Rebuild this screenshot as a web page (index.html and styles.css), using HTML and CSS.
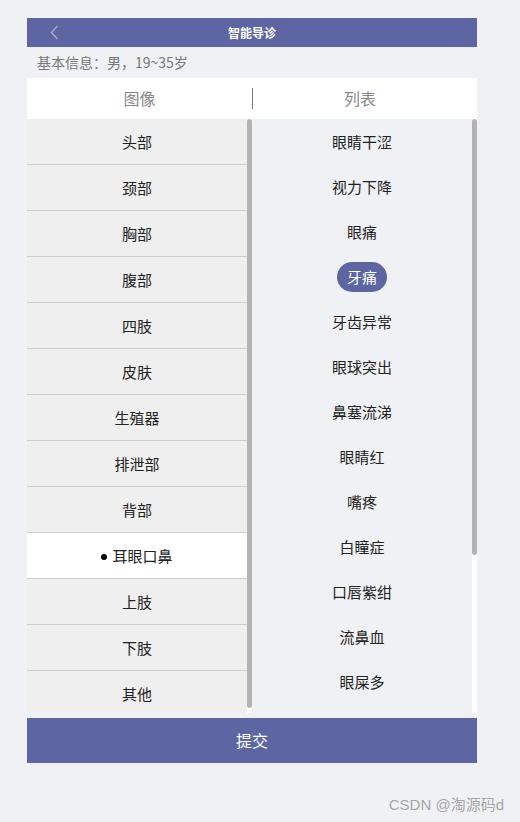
FILE: index.html
```html
<!DOCTYPE html>
<html lang="zh-CN">
<head>
<meta charset="utf-8">
<title>智能导诊</title>
<link rel="stylesheet" href="styles.css">
</head>
<body>
<div class="app">
  <header class="header">
    <div class="back">
      <svg width="9" height="15" viewBox="0 0 9 15"><polyline points="7.5,1 1.5,7.5 7.5,14" fill="none" stroke="#a9acca" stroke-width="1.4"/></svg>
    </div>
    <div class="title">智能导诊</div>
    <div></div>
  </header>
  <div class="info">基本信息：男，19~35岁</div>
  <div class="tabs">
    <div class="tab tab-left">图像</div>
    <div class="tab-divider"></div>
    <div class="tab tab-right">列表</div>
  </div>
  <div class="panels">
    <div class="panel">
      <ul class="parts">
        <li class="part">头部</li>
        <li class="part">颈部</li>
        <li class="part">胸部</li>
        <li class="part">腹部</li>
        <li class="part">四肢</li>
        <li class="part">皮肤</li>
        <li class="part">生殖器</li>
        <li class="part">排泄部</li>
        <li class="part">背部</li>
        <li class="part part-active">耳眼口鼻</li>
        <li class="part">上肢</li>
        <li class="part">下肢</li>
        <li class="part">其他</li>
      </ul>
      <div class="scrollbar"><div class="thumb thumb-left"></div></div>
    </div>
    <div class="panel">
      <ul class="symptoms">
        <li class="symptom"><span>眼睛干涩</span></li>
        <li class="symptom"><span>视力下降</span></li>
        <li class="symptom"><span>眼痛</span></li>
        <li class="symptom"><span class="pill">牙痛</span></li>
        <li class="symptom"><span>牙齿异常</span></li>
        <li class="symptom"><span>眼球突出</span></li>
        <li class="symptom"><span>鼻塞流涕</span></li>
        <li class="symptom"><span>眼睛红</span></li>
        <li class="symptom"><span>嘴疼</span></li>
        <li class="symptom"><span>白瞳症</span></li>
        <li class="symptom"><span>口唇紫绀</span></li>
        <li class="symptom"><span>流鼻血</span></li>
        <li class="symptom"><span>眼屎多</span></li>
      </ul>
      <div class="scrollbar"><div class="thumb thumb-right"></div></div>
    </div>
  </div>
  <div class="submit">提交</div>
</div>
<div class="watermark">CSDN @淘源码d</div>
</body>
</html>
```
FILE: styles.css
```css
* { box-sizing: border-box; }
html, body {
  margin: 0;
  padding: 0;
  background: #f0f1f5;
  font-family: "Noto Sans CJK SC", "Microsoft YaHei", "Liberation Sans", sans-serif;
}
.app {
  width: 450px;
  margin-left: 27px;
  padding-top: 18px;
}
.header {
  height: 29px;
  background: #5d66a2;
  display: grid;
  grid-template-columns: 1fr auto 1fr;
  align-items: center;
}
.back {
  padding-left: 23px;
  display: flex;
  align-items: center;
  height: 29px;
}
.back svg { display: block; }
.title {
  color: #fff;
  font-size: 12px;
  font-weight: bold;
  line-height: 29px;
}
.info {
  height: 31px;
  line-height: 31px;
  padding-left: 10px;
  font-size: 14px;
  color: #777;
}
.tabs {
  height: 41px;
  background: #fff;
  display: flex;
  align-items: center;
}
.tab {
  font-size: 16px;
  color: #888;
  text-align: center;
  line-height: 41px;
}
.tab-left { width: 225px; }
.tab-right { flex: 1; padding-right: 10px; }
.tab-divider {
  width: 1px;
  height: 21px;
  background: #777;
}
.panels {
  display: flex;
  height: 594px;
}
.panel {
  display: flex;
  width: 225px;
  height: 594px;
}
.parts, .symptoms {
  list-style: none;
  margin: 0;
  padding: 0;
  width: 220px;
  height: 594px;
  overflow: hidden;
}
.part {
  height: 46px;
  line-height: 45px;
  border-bottom: 1px solid #cdcdcd;
  background: #efefef;
  text-align: center;
  font-size: 15px;
  color: #222;
}
.part-active {
  background: #fff;
}
.part-active::before {
  content: "";
  display: inline-block;
  width: 6px;
  height: 6px;
  border-radius: 50%;
  background: #000;
  margin-right: 5px;
  vertical-align: middle;
  position: relative;
  top: -1px;
}
.symptoms {
  background: #f0f1f5;
}
.symptom {
  height: 45px;
  display: flex;
  align-items: center;
  justify-content: center;
  font-size: 15px;
  color: #222;
}
.pill {
  background: #5d66a2;
  color: #fff;
  width: 50px;
  height: 30px;
  line-height: 30px;
  border-radius: 15px;
  text-align: center;
}
.scrollbar {
  width: 5px;
  height: 594px;
  background: #fff;
}
.thumb {
  width: 5px;
  background: #b3b3b3;
  border-radius: 3px;
}
.thumb-left { height: 589px; }
.thumb-right { height: 436px; }
.submit {
  margin-top: 5px;
  height: 45px;
  line-height: 45px;
  background: #5d66a2;
  color: #fff;
  text-align: center;
  font-size: 16px;
}
.watermark {
  margin-top: 32px;
  padding-right: 16px;
  text-align: right;
  font-family: "Liberation Sans", "Noto Sans CJK SC", sans-serif;
  font-size: 15px;
  line-height: 20px;
  color: #a3a3a3;
  text-shadow: 0 0 1px #fff;
}
```
